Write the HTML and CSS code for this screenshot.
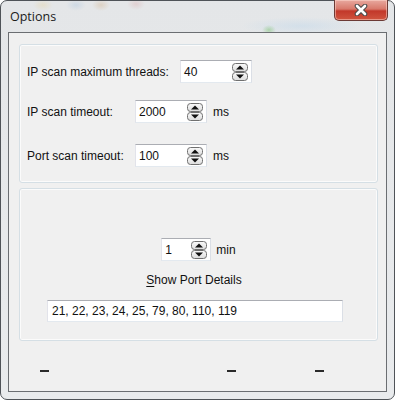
FILE: index.html
```html
<!DOCTYPE html>
<html>
<head>
<meta charset="utf-8">
<link rel="stylesheet" href="styles.css">
</head>
<body>
<div class="window">
  <div class="titlebar">
    <span class="title">Options</span>
    <div class="close">
      <svg width="14" height="12" viewBox="0 0 14 12">
        <path d="M3 2 L11 10 M11 2 L3 10" stroke="#4a4a4a" stroke-width="4.6" stroke-linecap="round"/>
        <path d="M3 2 L11 10 M11 2 L3 10" stroke="#fff" stroke-width="2.6" stroke-linecap="round"/>
      </svg>
    </div>
  </div>
  <div class="client">
    <div class="group g1">
      <div class="row r1">
        <span class="label l1">IP scan maximum threads:</span>
        <div class="spinbox">
          <span class="val">40</span>
          <svg class="spin" width="16" height="18" viewBox="0 0 16 18"><defs><linearGradient id="sg" x1="0" y1="0" x2="0" y2="1"><stop offset="0" stop-color="#fafafa"/><stop offset="1" stop-color="#dcdcdc"/></linearGradient></defs><rect x="0.5" y="0.5" width="15" height="8" rx="3" fill="url(#sg)" stroke="#707070"/><rect x="0.5" y="9.5" width="15" height="8" rx="3" fill="url(#sg)" stroke="#707070"/><path d="M4 6.5 L8 2.5 L12 6.5 Z" fill="#111"/><path d="M4 11.5 L12 11.5 L8 15.5 Z" fill="#111"/></svg>
        </div>
      </div>
      <div class="row r2">
        <span class="label l2">IP scan timeout:</span>
        <div class="spinbox">
          <span class="val">2000</span>
          <svg class="spin" width="16" height="18" viewBox="0 0 16 18"><rect x="0.5" y="0.5" width="15" height="8" rx="3" fill="url(#sg)" stroke="#707070"/><rect x="0.5" y="9.5" width="15" height="8" rx="3" fill="url(#sg)" stroke="#707070"/><path d="M4 6.5 L8 2.5 L12 6.5 Z" fill="#111"/><path d="M4 11.5 L12 11.5 L8 15.5 Z" fill="#111"/></svg>
        </div>
        <span class="unit">ms</span>
      </div>
      <div class="row r3">
        <span class="label l2">Port scan timeout:</span>
        <div class="spinbox">
          <span class="val">100</span>
          <svg class="spin" width="16" height="18" viewBox="0 0 16 18"><rect x="0.5" y="0.5" width="15" height="8" rx="3" fill="url(#sg)" stroke="#707070"/><rect x="0.5" y="9.5" width="15" height="8" rx="3" fill="url(#sg)" stroke="#707070"/><path d="M4 6.5 L8 2.5 L12 6.5 Z" fill="#111"/><path d="M4 11.5 L12 11.5 L8 15.5 Z" fill="#111"/></svg>
        </div>
        <span class="unit">ms</span>
      </div>
    </div>
    <div class="group g2">
      <div class="row center">
        <div class="spinbox small">
          <span class="val">1</span>
          <svg class="spin" width="16" height="18" viewBox="0 0 16 18"><rect x="0.5" y="0.5" width="15" height="8" rx="3" fill="url(#sg)" stroke="#707070"/><rect x="0.5" y="9.5" width="15" height="8" rx="3" fill="url(#sg)" stroke="#707070"/><path d="M4 6.5 L8 2.5 L12 6.5 Z" fill="#111"/><path d="M4 11.5 L12 11.5 L8 15.5 Z" fill="#111"/></svg>
        </div>
        <span class="unit min">min</span>
      </div>
      <div class="link"><u>S</u>how Port Details</div>
      <div class="textfield">21, 22, 23, 24, 25, 79, 80, 110, 119</div>
    </div>
    <div class="footer">
      <span class="dash d1"></span>
      <span class="dash d2"></span>
      <span class="dash d3"></span>
    </div>
  </div>
</div>
</body>
</html>
```
FILE: styles.css
```css
html, body {
  margin: 0;
  padding: 0;
  background: #ffffff;
}
.window {
  box-sizing: border-box;
  width: 395px;
  height: 400px;
  border: 1px solid #4f5358;
  border-radius: 7px 7px 7px 7px;
  background:
    radial-gradient(ellipse 10px 6px at 42px 4px, rgba(230, 200, 120, 0.25), transparent),
    radial-gradient(ellipse 10px 6px at 75px 4px, rgba(140, 180, 220, 0.25), transparent),
    radial-gradient(ellipse 9px 6px at 100px 4px, rgba(200, 150, 90, 0.25), transparent),
    radial-gradient(ellipse 9px 6px at 135px 3px, rgba(210, 120, 120, 0.2), transparent),
    radial-gradient(ellipse 7px 5px at 268px 29px, rgba(80, 180, 60, 0.35), transparent),
    radial-gradient(ellipse 60px 9px at 300px 25px, rgba(190, 215, 235, 0.45), transparent),
    linear-gradient(#e4e6e8, #e9ebed);
  display: flex;
  flex-direction: column;
  padding: 0 6px 7px 6px;
  font-family: "Liberation Sans", Arial, sans-serif;
  font-size: 12px;
  color: #111;
}
.titlebar {
  height: 31px;
  display: flex;
  justify-content: space-between;
  align-items: flex-start;
}
.title {
  font-family: "Open Sans", "Noto Sans", sans-serif;
  font-size: 12.5px;
  color: #1b1b1b;
  margin-top: 7px;
  margin-left: 3px;
}
.close {
  width: 54px;
  height: 21px;
  margin-top: -1px;
  box-sizing: border-box;
  border: 1px solid #6c3a35;
  border-top: none;
  border-radius: 0 0 5px 5px;
  background: linear-gradient(#e8a99f 0%, #d8796b 45%, #c2382a 55%, #d0553f 100%);
  box-shadow: inset 0 0 0 1px rgba(255, 220, 210, 0.5);
  display: flex;
  align-items: center;
  justify-content: center;
}
.client {
  flex: 1;
  margin: 0 1px;
  border: 1px solid #6b6e72;
  background: #f0f0f0;
  padding: 11px 8px 0 10px;
  display: flex;
  flex-direction: column;
}
.group {
  border: 1px solid #d5dfe5;
  border-radius: 3px;
  box-shadow: inset 0 0 0 1px #fbfbfb;
  box-sizing: border-box;
}
.g1 {
  height: 139px;
  padding: 15px 0 0 7px;
}
.g2 {
  height: 153px;
  margin-top: 5px;
  padding-top: 49px;
  display: flex;
  flex-direction: column;
}
.row {
  display: flex;
  align-items: center;
  height: 23px;
}
.r2 { margin-top: 17px; }
.r3 { margin-top: 21px; }
.label.l1 { width: 153px; }
.label.l2 { width: 108px; }
.spinbox {
  box-sizing: border-box;
  width: 72px;
  height: 23px;
  background: #fff;
  border: 1px solid;
  border-color: #abadb3 #dbdfe6 #e3e9ef #e2e3ea;
  display: flex;
  align-items: center;
  justify-content: space-between;
  padding: 0 3px 0 3px;
}
.spinbox.small { width: 50px; }
.val { font-size: 12px; }
.unit { margin-left: 6px; }
.unit.min { margin-left: 5px; }
.center { justify-content: center; }
.link {
  text-align: center;
  margin-top: 12px;
  margin-right: 9px;
  line-height: 15px;
}
.link u { text-decoration-thickness: 1px; text-underline-offset: 2px; }
.textfield {
  box-sizing: border-box;
  margin: 12px 0 0 27px;
  width: 296px;
  height: 22px;
  background: #fff;
  border: 1px solid;
  border-color: #abadb3 #dbdfe6 #e3e9ef #e2e3ea;
  padding: 0 4px;
  display: flex;
  align-items: center;
}
.footer {
  display: flex;
  padding-top: 29px;
  padding-left: 21px;
}
.dash {
  width: 9px;
  height: 2px;
  background: #2a2a2a;
}
.d2 { margin-left: 178px; }
.d3 { margin-left: 79px; }
```
